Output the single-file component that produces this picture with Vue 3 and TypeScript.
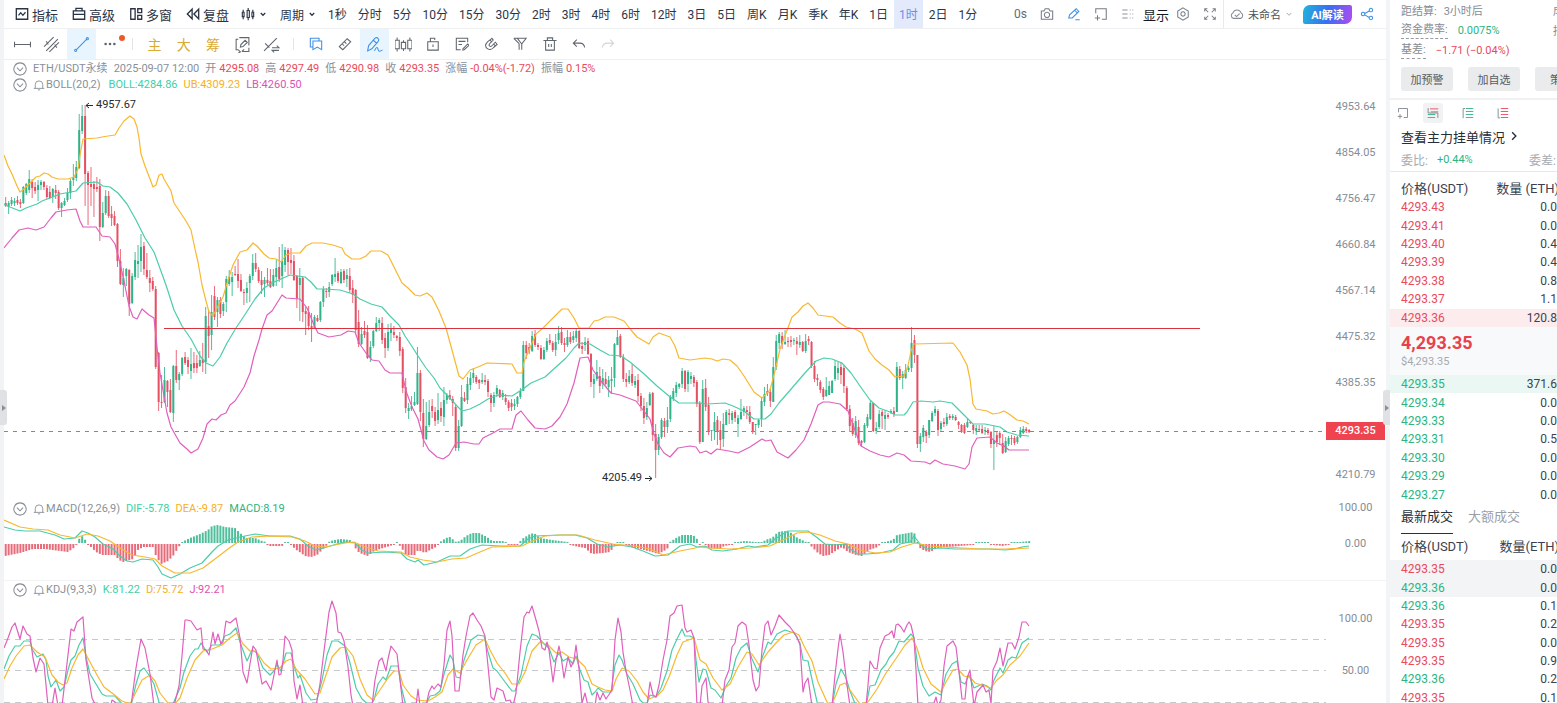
<script setup lang="ts">
type Point = [number, number]

const periods = ['1秒', '分时', '5分', '10分', '15分', '30分', '2时', '3时', '4时', '6时', '12时', '3日', '5日', '周K', '月K', '季K', '年K', '1日', '1时', '2日', '1分']
const activePeriod = '1时'

const icons: Record<string, string> = {
  indicator: 'M1.500 2h13v12h-13zM4 9.500l2.500-3 2.500 3 3-3.500',
  advanced: 'M1.500 4.500h13v9.500h-13zM4.500 4.500v-3h7v3M1.500 8.500h13',
  windows: 'M2 2h5v12h-5zM10 2h4.500v4.500h-4.500zM10 9.500h4.500v4.500h-4.500z',
  replay: 'M7 2.500v11L1.500 8zM14.500 2.500v11L9 8z',
  chevron: 'M3.500 6l4.500 4.500L12.500 6',
  next: 'M5.500 3l5 5-5 5',
  camera: 'M1.500 4.500h3l1.500-2.500h4l1.500 2.500h3v9.500h-13zM8 6a3 3 0 1 0 .01 0z',
  pencil: 'M2 12.500l1-3.500 7.500-7 3 3L6 12.500zM9 4l2.500 2.500M9.500 14.500h5',
  addbox: 'M2 7V2h12v12H9M1 12.500h6M4 9.500v6',
  list: 'M1.500 3.500h6M1.500 8h6M1.500 12.500h6M10 3.500h1M13 3.500h1M10 8h1M13 8h1M10 12.500h1M13 12.500h1',
  hexagon: 'M8 1l6 3.500v7L8 15l-6-3.500v-7zM8 5.500a2.500 2.500 0 1 0 .01 0z',
  expand: 'M2 5V2h3M2 2l4 4M11 2h3v3M14 2l-4 4M2 11v3h3M2 14l4-4M14 11v3h-3M14 14l-4-4',
  cloud: 'M4 13a3.500 3.500 0 0 1-.5-6.500 4.800 4.800 0 0 1 9 0A3.500 3.500 0 0 1 12 13zM5.500 9l2 2 3.500-3.500',
  share: 'M3.500 6a2 2 0 1 0 .01 0zM12.500 1.500a2 2 0 1 0 .01 0zM12.500 10.500a2 2 0 1 0 .01 0zM5.500 7.500l5-3M5.500 9l5 3',
  hline: 'M0 8h16M.5 5.500v5M15.500 5.500v5',
  parallel: 'M1 10L10 1M6 15l9-9M3 5l2 3M11 8l2 3M3 14L14 3',
  trend: 'M3.500 12.500l9-9M1.500 13.500a1 1 0 1 0 2 0 1 1 0 1 0-2 0M12.500 2.500a1 1 0 1 0 2 0 1 1 0 1 0-2 0',
  autodraw: 'M4 3H2v10h2M5 1.500h9V9M7.500 14.500h6.500V11M9.500 12.500l-2 2M6 10.500l.5-2.500 4-4 2 2-4 4zM4 13l2 2-2 1',
  measure: 'M1 14L13 2M2 7l4 4M8.500 11h6.500l-2-2M15 13.500H8.500l2 2',
  bookmark: 'M4.500 4.500h10v10l-5-3-5 3zM4 11.500H1.500v-10h10V4',
  ruler: 'M1.500 11L10.500 2l4 3.500-9 9zM5 8l2 2M7.500 5.500l2 2',
  draw: 'M1.500 14l1-5 6-7c2-1.500 4.500 1 3 3l-6 7zM7 4l3 3M8 14c2-5 3-3 3.500-1s2 1.500 4 0',
  candles: 'M0 4h4v8H0zM2 1.500V4M2 12v2.500M6 6h4v6H6zM8 4v2M8 12v2M12 4h4v8h-4zM14 1.500V4M14 12v2.500',
  lock: 'M2 5.500h12V15H2zM5 5.500V1.500h5v2M8 8.500v3',
  note: 'M14.500 6V1.500h-13v13h5M4 5h8M4 8.500h4M9 13.500l5.500-5.500 1.500 1.500-5.500 5-1.500.5z',
  magnet: 'M9 1.500L4 5.500c-6 6 2 12 7 6.500l4-3.500-2-2.500-4 4c-2 2-4.500-.5-2.500-2.500l4-4zM7 3.500L9 6M11 8l2 2.500',
  filter: 'M1 1.500h14L10 8v6.500M7 7.500v7M1 1.500l6 6M5 1.500L10 8',
  trash: 'M.5 4h15M3 4v11h10V4M5 4V1h6v3M6.500 8v3.500M9.500 8v3.500',
  undo: 'M5.500 3L1.500 7l4 4M2 7h7c3 0 5 2 5.500 5',
  redo: 'M10.500 3l4 4-4 4M14 7H7c-3 0-5 2-5.500 5',
  bell: 'M1 12.500h14M3 12.500V7.500a5 5 0 0 1 10 0v5M6.500 14.500h3',
  fold: 'M8 1a7 7 0 1 0 .01 0zM4.500 6.500L8 10l3.500-3.500'
}

const mainTools = [
  { icon: 'indicator', label: '指标' },
  { icon: 'advanced', label: '高级' },
  { icon: 'windows', label: '多窗' },
  { icon: 'replay', label: '复盘' }
]
const lineTools = ['hline', 'parallel', 'trend']
const textTools = ['主', '大', '筹']
const editTools = ['bookmark', 'ruler', 'draw', 'candles', 'lock', 'note', 'magnet', 'filter', 'trash', 'undo', 'redo']

/* Each candle: direction, high, body top, body bottom, low */
const candleData = `
r197,203,206,207 g201,203,207,214 g197,200,204,206 g198,201,203,206 r196,200,203,205 r199,202,204,208 g186,187,203,204 g183,184,193,195 g170,179,190,193 r179,182,188,198
r182,187,191,194 g180,185,190,201 g180,182,185,190 r181,182,187,190 r185,188,197,199 r186,192,198,199 g188,189,197,203 r185,190,193,199 r190,192,208,210 g202,203,208,217
g198,201,205,206 g188,193,200,202 g179,181,193,199 g164,177,180,186 g161,167,178,181 g114,130,168,169 g105,116,131,134 r105,116,174,206 r171,173,185,225 r167,184,187,206
r181,184,189,217 r177,187,189,192 r179,186,227,241 g202,213,227,228 g190,196,213,215 r191,196,216,218 r206,214,218,226 r211,216,225,226 r223,224,261,267 r249,261,284,285
g268,278,285,297 g268,269,276,286 r269,270,304,316 g273,276,303,304 g252,260,277,280 g245,261,264,278 g234,247,261,272 r242,246,269,275 r253,270,277,279 r270,278,283,292
r277,281,289,291 r286,289,367,369 r352,353,402,411 r375,402,403,408 g367,380,402,403 r380,381,392,407 r379,390,412,413 g365,366,413,422 r350,366,380,383 g372,374,380,390
g357,358,374,376 r352,357,363,365 r357,360,367,374 g348,364,371,379 r352,363,368,373 r355,363,368,373 g351,360,366,367 r343,359,363,372 g307,316,362,374 r310,326,336,358
g295,312,335,350 r286,296,317,320 g297,300,312,327 r297,300,314,318 g302,304,311,316 g276,279,302,312 g270,277,284,286 g272,277,282,296 r266,274,275,276 r259,274,281,288
r274,280,291,292 r289,292,293,305 g282,288,293,303 g274,276,283,302 g254,263,276,280 r253,263,269,272 r267,270,281,283 r271,280,285,294 g277,280,284,297 r268,280,283,285
r269,281,287,288 g269,275,286,287 g260,268,277,286 r247,267,279,282 g244,261,276,288 g247,250,265,272 r248,250,262,275 r248,260,263,274 r255,261,280,281 r275,276,298,308
g268,278,285,321 r276,278,312,322 r307,311,314,335 r306,312,326,330 r313,326,329,342 g315,317,328,328 r315,318,321,322 g301,302,320,322 g286,289,302,307 r288,291,292,298
g282,287,292,297 g274,275,284,286 g258,274,277,282 r271,273,281,283 g269,272,283,284 r269,271,280,283 g269,275,279,287 r268,276,290,293 r280,288,295,303 r289,290,330,333
r310,322,344,347 g327,334,344,345 r321,331,335,338 r325,332,358,359 g341,347,358,362 g330,331,346,348 g317,323,331,332 g318,320,323,331 r317,323,340,344 r333,338,348,358
g324,332,348,351 g323,328,333,341 r326,332,335,338 r335,336,338,341 r332,337,351,356 r347,349,388,393 r378,387,408,413 g403,408,411,419 g396,406,409,411 g392,402,405,406
g347,373,404,405 r370,373,412,421 r399,413,439,447 g402,426,439,440 g400,412,425,427 r399,406,411,418 r407,412,421,426 g393,410,420,424 r402,408,416,422 g387,400,417,426
g393,395,400,404 r390,395,399,400 r396,399,403,416 r405,407,448,451 g420,426,448,451 g385,397,426,427 r392,398,401,402 g377,384,400,404 g372,378,385,390 g368,373,378,383
r375,377,382,384 r379,380,383,389 g373,380,382,384 r375,380,382,385 r379,381,392,397 r393,395,403,412 g392,395,403,407 g385,388,394,397 r389,390,397,398 g390,393,397,400
r394,398,402,405 r400,402,408,411 r399,403,407,411 g399,404,406,410 g396,397,404,407 g388,391,397,399 g341,345,391,391 r341,345,353,359 r343,347,350,354 g331,336,351,352
r330,334,345,347 r343,345,347,350 r345,348,359,360 g347,350,359,360 g338,341,350,352 r334,340,343,345 r341,343,350,352 g334,342,350,356 g326,333,340,344 r327,332,343,345
r338,343,345,352 g330,337,345,347 r332,337,342,344 g331,336,340,343 g329,331,338,342 r330,331,348,349 r342,346,349,354 g337,342,345,351 r338,341,354,355 r353,354,382,387
g374,379,384,398 g360,372,379,381 r367,376,386,393 g369,378,384,389 r372,379,384,385 g376,380,387,397 g367,379,381,394 g343,344,378,387 g330,337,345,345 r334,336,357,358
r354,357,379,382 r373,379,382,387 g370,376,382,384 r364,374,383,386 g376,381,385,388 r374,380,396,402 r393,396,406,411 r398,406,418,424 g402,408,417,420 g392,394,405,406
r392,393,435,441 r424,434,450,478 g434,437,450,455 g418,420,437,439 r418,421,427,437 g407,420,427,433 g395,397,419,422 g388,391,399,401 g382,385,393,397 g383,384,387,389
g368,371,384,388 r370,371,389,392 g370,372,384,392 g372,376,379,384 r375,377,383,387 r380,382,404,407 r401,403,442,444 g380,389,442,442 r379,388,407,411 r397,405,431,435
g430,430,431,441 g412,422,431,440 r416,420,432,445 r421,430,440,450 g413,424,439,447 g410,412,425,425 r409,413,415,424 g411,413,420,424 r410,412,418,422 g415,418,424,437
g399,412,419,420 g406,408,412,416 r406,410,412,419 r406,412,422,424 r422,422,432,434 g424,424,425,435 g419,420,425,428 g397,401,419,427 g387,394,402,406 r384,391,393,396
r388,392,401,407 g357,367,402,402 g335,341,367,370 g332,334,343,349 r332,336,344,349 g330,342,344,345 r337,341,342,347 r336,340,342,347 g338,340,341,345 r337,341,344,355
g335,342,345,348 r341,342,351,352 g334,341,351,353 r336,339,341,345 r341,342,366,368 r361,366,379,382 r374,378,380,386 r380,382,390,393 r387,389,397,400 g377,390,396,397
g381,386,395,395 g380,381,393,393 g360,366,379,381 g362,368,373,380 r362,367,375,384 r366,368,386,393 r386,388,409,411 r405,409,426,432 r418,423,434,436 g416,421,435,438
r420,427,443,445 r440,441,443,447 g423,425,442,443 g414,417,426,428 g401,403,419,420 r403,403,431,432 g422,428,431,434 g410,414,427,429 r410,412,416,429 g410,415,419,430
r413,415,417,419 g409,411,413,414 r407,411,414,417 g362,367,412,412 r366,369,378,380 g371,374,378,389 g364,370,378,379 g366,368,370,372 g327,343,368,372 r335,340,355,363
r355,355,444,448 g433,436,444,452 g425,428,437,442 r430,432,436,443 g420,420,435,438 g411,413,421,422 g406,409,413,416 r409,411,430,436 g421,423,429,431 r418,422,424,427
g413,417,424,426 r414,416,418,420 g414,416,418,420 r415,417,420,421 r421,422,425,429 r424,425,432,433 r423,425,433,434 g419,422,427,428 r421,422,423,424 r424,425,430,434
g425,428,431,435 r425,429,430,432 r425,429,433,434 g427,430,431,435 r428,430,433,435 r431,432,444,448 g426,440,444,470 r432,435,442,447 r431,433,438,445 r434,443,453,454
g437,441,452,453 g436,438,444,446 r435,438,439,445 r436,438,443,445 g436,437,442,444 g427,430,437,438 g426,429,433,434 r427,429,431,433 r429,430,432,433`

const firstX = 5.7
const stepX = 2.941
const candles = candleData.trim().split(/\s+/).map((item, i) => {
  const [high, top, bottom, low] = item.slice(1).split(',').map(Number)
  return { up: item[0] === 'g', x: firstX + i * stepX, high, top, bottom, low }
})

const histogramKeys: Point[] = [[5, -12], [20, -9], [33, -5], [45, -5], [60, -7], [68, -8], [75, -3], [78, 3], [82, 7], [87, 1], [91, -3], [96, -8], [102, -11], [115, -11], [119, -16], [123, -18], [133, -15], [138, -6], [143, -3], [153, -3], [156, -12], [161, -20], [168, -17], [173, -12], [180, -1], [184, 2], [190, 5], [200, 9], [208, 13], [212, 17], [218, 18], [225, 16], [235, 15], [240, 10], [246, 5], [255, 5], [262, 2], [266, 1], [268, -2], [282, -2], [285, 1], [290, 1], [295, -5], [301, -9], [305, -12], [311, -13], [317, -11], [325, -3], [330, 2], [340, 4], [350, 3], [354, -1], [357, -7], [362, -10], [368, -12], [374, -7], [383, -4], [390, -2], [397, 1], [401, -3], [406, -11], [415, -11], [418, -6], [425, -9], [430, -6], [436, -3], [440, 1], [446, 5], [450, 6], [456, 1], [460, 2], [466, 7], [472, 10], [479, 10], [487, 6], [492, 2], [502, 2], [506, 1], [510, -1], [518, -1], [522, 4], [530, 9], [534, 10], [540, 5], [552, 3], [560, 2], [568, 1], [574, -2], [585, -4], [592, -10], [603, -9], [610, -8], [615, -1], [619, 1], [623, 1], [627, -2], [640, -5], [652, -8], [658, -10], [664, -7], [668, -4], [670, 1], [676, 5], [682, 8], [693, 8], [697, 4], [700, -1], [705, 1], [708, -4], [720, -5], [724, -2], [730, -1], [738, 1], [745, 2], [755, 1], [762, 1], [768, 4], [772, 5], [778, 11], [784, 12], [790, 11], [796, 6], [806, 1], [808, 1], [812, -3], [818, -9], [823, -12], [829, -11], [837, -6], [842, -3], [848, -8], [856, -11], [862, -12], [869, -6], [878, -3], [881, 1], [885, 1], [893, 3], [897, 8], [908, 10], [914, 11], [918, -1], [921, -5], [928, -8], [932, -7], [937, -4], [948, -3], [960, -2], [972, -1], [980, 1], [987, 1], [993, -1], [1004, -2], [1012, 1], [1020, 1], [1030, 2]]

function valueAt(x: number): number {
  const next = histogramKeys.findIndex((key) => key[0] > x)
  if (next < 1) return histogramKeys[next === 0 ? 0 : histogramKeys.length - 1][1]
  const [x0, y0] = histogramKeys[next - 1]
  const [x1, y1] = histogramKeys[next]
  return y0 + ((y1 - y0) * (x - x0)) / (x1 - x0)
}
const histogram = candles.map(({ x }) => {
  const value = valueAt(x)
  return { x, up: value >= 0, size: Math.max(1, Math.abs(value)) }
})

const lines = {
  upper: '4,155 8,166 12,174 17,186 20,192 24,189 29,184 36,177 40,176 44,173 48,174 52,177 58,179 68,179 74,177 78,169 80,155 83,139 97,138 102,137 108,136 115,135 119,128 124,121 130,116 134,119 137,127 139,138 141,154 145,166 150,179 153,187 156,185 159,175 162,174 164,179 171,191 174,203 180,212 186,221 191,230 195,249 198,262 202,285 206,301 209,312 213,316 218,306 223,297 228,280 233,265 240,252 247,250 253,243 257,246 264,254 269,258 276,259 281,262 286,255 291,253 300,253 306,246 312,243 323,243 333,245 342,248 345,254 352,259 360,259 366,256 371,251 381,251 388,255 395,269 402,283 408,288 415,295 420,296 427,293 432,297 439,311 446,328 452,350 459,376 463,379 470,370 478,367 487,363 512,364 517,373 522,373 524,362 529,350 536,334 543,328 550,321 556,315 562,309 568,309 574,318 579,328 589,328 594,321 599,320 605,317 614,317 624,321 631,330 637,337 649,344 653,337 659,333 670,337 675,346 679,358 690,360 705,358 712,359 717,361 723,359 730,360 737,366 744,376 754,392 762,398 770,390 775,371 780,349 786,333 792,317 798,312 803,306 808,303 813,308 818,315 833,317 840,323 846,327 855,329 862,333 869,351 875,359 882,365 889,370 895,377 904,376 908,366 911,351 914,344 953,343 960,352 967,365 970,379 973,404 976,409 987,411 993,414 999,413 1004,411 1009,414 1017,420 1023,421 1029,424',
  middle: '4,204 10,207 20,211 26,208 37,204 42,201 50,198 60,194 76,191 83,183 97,182 103,186 110,187 118,193 127,204 136,220 145,238 154,252 162,274 167,288 174,310 182,326 191,339 200,356 206,363 213,366 220,357 227,343 236,328 246,313 255,299 264,288 272,283 281,279 290,275 305,277 311,282 317,289 324,289 340,290 353,294 360,299 371,304 382,307 390,316 399,325 405,336 411,345 418,356 426,368 434,378 440,388 448,396 457,406 462,411 470,409 480,404 488,399 498,395 512,396 523,389 531,383 545,377 556,367 566,358 574,348 579,343 590,344 600,350 609,355 621,356 630,362 643,373 657,386 669,396 679,403 700,403 707,404 725,403 733,406 744,411 750,416 754,419 765,419 771,414 779,403 792,388 804,374 816,361 824,358 832,359 842,363 851,373 860,386 870,400 879,408 890,412 895,415 904,415 907,412 913,402 921,401 933,402 940,401 952,403 960,411 970,421 973,424 985,424 1000,427 1007,432 1017,435 1029,436',
  lower: '4,248 12,238 19,230 28,228 36,230 44,227 51,218 56,212 67,210 76,209 80,221 83,227 96,227 102,236 110,237 115,244 119,259 124,281 129,306 133,317 137,319 142,309 149,315 154,318 157,347 160,373 164,396 167,413 171,427 176,436 180,443 187,449 191,453 198,449 203,438 207,424 212,419 216,420 221,415 226,413 230,405 235,401 244,387 250,373 254,356 259,340 262,329 267,315 272,311 282,295 286,298 300,299 307,308 314,325 318,333 329,337 341,335 348,331 355,332 359,343 366,353 372,360 379,361 385,370 390,373 402,373 406,391 412,407 418,419 424,441 429,450 437,457 443,459 449,455 456,443 464,442 474,444 479,444 483,438 493,433 500,429 512,429 516,415 521,411 528,420 535,428 545,429 552,426 560,417 567,404 574,383 580,358 588,357 593,370 601,381 611,393 620,395 636,401 643,410 650,419 654,434 658,444 664,453 670,457 678,448 690,446 696,447 700,453 706,451 711,454 717,449 729,451 738,453 750,447 762,439 766,441 771,440 777,452 788,458 796,450 804,440 811,424 818,405 823,402 829,402 840,404 848,411 853,425 861,446 870,451 880,455 889,457 897,453 904,455 911,461 925,462 930,464 935,460 943,464 955,466 965,469 969,464 972,447 977,438 990,437 997,443 1004,446 1009,450 1029,450',
  dif: '4,527 15,530 25,531 40,531 55,535 64,539 75,538 82,531 88,533 95,537 103,544 113,549 120,556 127,561 133,562 142,559 153,560 158,567 162,574 171,578 180,574 190,568 202,563 212,552 218,546 228,540 240,537 255,534 270,536 290,536 300,539 308,546 316,550 327,547 337,544 345,542 355,543 362,550 368,553 385,552 401,553 407,559 415,562 418,560 424,565 437,562 450,556 460,556 470,549 482,545 500,546 520,546 528,539 535,536 560,535 575,535 587,538 597,544 608,547 620,545 632,547 643,551 655,556 668,555 680,546 690,544 697,547 705,546 712,550 723,551 737,549 748,546 755,547 768,545 775,539 788,531 808,531 815,536 825,544 835,545 845,544 850,549 858,554 867,554 880,553 893,550 900,544 910,542 914,536 920,544 927,549 940,548 955,549 990,549 1005,550 1015,549 1022,547 1029,546',
  dea: '4,520 20,527 33,529 48,530 60,535 75,538 87,534 98,536 110,541 120,548 132,555 145,557 155,559 162,566 175,573 190,573 203,568 215,559 228,549 238,542 252,537 270,536 292,537 305,541 315,546 325,547 345,543 354,542 365,547 378,551 401,552 410,557 423,560 437,562 452,559 466,558 480,552 492,547 522,546 530,542 545,536 560,535 578,535 595,540 613,544 635,546 650,549 663,555 680,551 690,549 700,547 710,548 730,549 750,548 770,546 785,539 797,533 808,532 820,535 835,541 848,544 860,550 875,553 890,552 902,547 915,543 930,546 945,547 980,549 1005,549 1029,548',
  j: '4,648 8,638 12,627 15,623 20,639 23,626 27,634 30,636 33,658 36,672 40,658 44,664 48,706 52,706 55,688 58,706 62,706 66,672 71,629 74,631 77,622 83,617 86,660 92,698 96,706 110,710 112,700 115,702 117,710 131,706 136,668 141,639 145,648 150,674 154,706 174,706 179,686 182,656 185,620 187,620 191,621 197,630 201,628 203,649 206,650 209,655 213,632 215,644 218,634 221,644 223,642 226,621 230,623 236,618 240,638 243,672 247,683 250,664 253,646 256,650 262,684 266,681 271,690 277,660 279,675 281,674 283,660 285,636 289,641 292,650 294,681 297,699 300,685 303,706 316,706 320,684 324,651 329,612 332,601 336,613 338,632 341,633 344,641 348,667 351,695 353,706 372,706 375,680 379,661 382,658 386,671 388,659 391,646 397,654 400,680 403,706 416,706 418,689 420,706 426,706 429,692 432,686 434,689 438,684 441,687 444,665 447,630 450,621 452,636 455,691 459,691 463,655 466,636 470,616 473,613 477,620 481,626 485,636 488,666 491,697 494,700 497,688 503,691 506,701 510,700 513,706 516,693 520,652 524,617 527,612 529,613 532,606 536,620 539,631 542,648 545,650 547,642 549,650 551,666 553,682 556,660 559,646 561,656 564,678 568,657 571,667 574,660 576,645 579,669 582,703 585,693 588,706 595,706 597,692 600,700 603,693 606,699 612,690 615,640 618,618 621,632 623,652 626,671 630,690 633,706 647,706 650,682 653,695 656,697 659,685 663,660 667,640 670,616 674,613 677,606 682,605 685,628 687,632 691,630 694,638 697,706 700,706 702,686 706,678 708,702 710,706 722,706 725,680 729,670 732,647 735,643 738,626 742,622 746,625 749,645 753,680 756,691 759,686 762,650 765,625 768,621 771,635 775,626 779,615 785,622 790,627 797,637 800,645 803,692 805,683 808,678 812,706 832,706 835,675 838,649 840,634 843,652 847,685 850,706 866,706 868,685 870,661 874,668 877,669 880,648 885,636 889,634 892,631 894,638 896,625 898,624 901,627 904,632 907,625 909,622 911,625 914,638 916,670 918,706 933,706 936,697 938,706 941,700 944,666 947,646 953,641 956,647 959,672 962,699 965,699 967,678 970,670 974,706 977,692 983,685 986,692 989,690 991,704 993,670 997,661 1000,648 1003,666 1008,643 1012,643 1015,649 1019,637 1022,622 1026,622 1029,626',
  k: '4,669 9,656 15,646 20,646 24,641 30,641 32,649 37,657 43,654 46,660 48,676 51,687 56,680 60,691 64,687 68,670 71,660 75,656 79,645 83,638 86,657 90,674 96,684 102,694 106,696 115,696 124,706 131,706 136,684 140,671 144,668 149,675 154,684 160,706 172,706 180,688 184,672 190,656 195,649 198,649 201,643 207,652 212,645 220,645 225,636 230,634 236,628 240,642 247,661 252,650 257,653 263,668 270,675 274,671 277,664 281,671 286,653 291,653 295,669 298,678 300,675 306,693 311,700 317,699 322,680 327,655 332,641 338,641 345,646 350,663 356,688 362,699 370,706 374,700 378,684 383,677 386,680 391,666 398,666 401,686 406,706 425,706 430,696 435,695 440,691 444,674 450,655 453,660 456,677 460,678 464,660 471,640 478,635 484,636 488,652 493,668 497,671 505,682 512,691 515,691 521,675 527,646 532,634 537,636 544,644 549,648 554,662 559,653 563,661 568,658 573,664 576,656 580,670 584,680 588,682 592,695 595,692 598,688 603,692 611,692 615,665 619,655 622,660 627,674 633,684 640,700 646,706 650,695 656,697 661,688 667,671 672,650 677,639 682,629 685,636 690,636 694,638 696,660 699,682 703,669 706,670 711,688 715,690 721,698 726,686 731,678 736,658 741,648 747,643 752,659 758,672 762,658 768,642 771,644 777,634 785,630 794,633 800,643 803,660 808,661 813,684 818,706 832,706 836,684 841,669 846,678 850,691 856,706 866,706 870,686 875,685 881,670 886,664 889,658 894,652 899,641 904,642 911,634 914,638 918,668 923,686 929,696 935,692 941,695 946,674 952,664 957,661 961,682 965,684 969,675 974,688 982,684 987,686 991,690 994,680 1000,668 1003,673 1008,660 1012,657 1016,658 1022,643 1029,638',
  d: '4,679 10,666 16,656 24,646 30,645 37,652 45,657 52,675 58,682 63,685 67,683 72,668 78,655 83,649 90,662 97,675 104,687 112,693 122,701 130,704 136,692 142,680 150,675 155,681 160,693 167,702 173,706 180,698 187,678 195,660 203,651 212,649 222,645 230,638 237,633 243,644 250,651 256,651 264,663 271,669 280,668 286,661 291,659 296,669 305,679 315,694 320,693 325,678 332,657 340,648 346,647 353,656 360,679 367,695 373,700 380,690 388,678 394,671 399,671 403,685 411,696 417,700 428,701 435,697 442,692 448,675 453,669 460,673 467,660 476,645 485,639 490,650 497,663 505,673 512,684 519,684 525,672 532,651 540,642 548,645 556,653 562,652 569,657 577,659 585,667 592,684 598,687 605,690 612,691 616,679 622,668 629,671 637,681 643,692 649,699 657,696 663,690 669,677 677,655 683,642 694,638 700,660 706,664 713,678 722,690 730,684 738,667 747,652 752,654 759,665 768,652 776,643 784,635 793,632 799,635 804,646 812,661 818,682 827,702 831,706 836,695 840,685 845,683 850,690 860,704 868,702 877,689 886,673 895,660 905,645 912,638 917,648 923,668 931,684 941,692 946,682 953,670 958,669 964,676 970,677 975,683 985,686 991,688 997,680 1003,675 1010,665 1020,656 1029,643'
}

const quote = [
  ['开', '4295.08'], ['高', '4297.49'], ['低', '4290.98'], ['收', '4293.35'],
  ['涨幅', '-0.04%(-1.72)'], ['振幅', '0.15%']
]
const priceTicks = ['4953.64', '4854.05', '4756.47', '4660.84', '4567.14', '4475.32', '4385.35', '', '4210.79']

const asks = [['4293.43', '0.0'], ['4293.41', '0.0'], ['4293.40', '0.4'], ['4293.39', '0.4'], ['4293.38', '0.8'], ['4293.37', '1.1'], ['4293.36', '120.8']]
const bids = [['4293.35', '371.6'], ['4293.34', '0.0'], ['4293.33', '0.0'], ['4293.31', '0.5'], ['4293.30', '0.0'], ['4293.29', '0.0'], ['4293.27', '0.0']]
const trades = [
  { price: '4293.35', size: '0.0', up: false }, { price: '4293.36', size: '0.0', up: true },
  { price: '4293.36', size: '0.1', up: true }, { price: '4293.35', size: '0.2', up: false },
  { price: '4293.35', size: '0.0', up: false }, { price: '4293.35', size: '0.9', up: false },
  { price: '4293.36', size: '0.2', up: true }, { price: '4293.35', size: '0.1', up: false }
]
</script>

<template>
  <div class="app">
    <main class="workspace">
      <header class="bar topbar">
        <div class="main-tools">
          <button v-for="tool in mainTools" :key="tool.label" class="tool">
            <svg class="icon dark" viewBox="0 0 16 16"><path :d="icons[tool.icon]" /></svg>{{ tool.label }}
          </button>
          <button class="tool style-tool" aria-label="K线样式">
            <svg class="icon candle-icon" viewBox="0 0 16 16"><path d="M1.500 6h2v5h-2zM2.500 3v3M2.500 11v3M7 4h2.500v8H7zM8.200 1v3M8.200 12v3M12.500 6h2v5h-2zM13.500 3v3M13.500 11v3" /></svg>
            <svg class="caret" viewBox="0 0 16 16"><path :d="icons.chevron" /></svg>
          </button>
          <button class="tool small">周期<svg class="caret" viewBox="0 0 16 16"><path :d="icons.chevron" /></svg></button>
        </div>
        <nav class="periods">
          <button v-for="period in periods" :key="period" :class="{ active: period === activePeriod }">{{ period }}</button>
        </nav>
        <div class="right-tools">
          <span class="seconds">0s</span>
          <button aria-label="截图"><svg class="icon" viewBox="0 0 16 16"><path :d="icons.camera" /></svg></button>
          <button class="blue" aria-label="画线"><svg class="icon" viewBox="0 0 16 16"><path :d="icons.pencil" /></svg></button>
          <button aria-label="新增窗口"><svg class="icon" viewBox="0 0 16 16"><path :d="icons.addbox" /></svg></button>
          <button class="display"><svg class="icon faint" viewBox="0 0 16 16"><path :d="icons.list" /></svg>显示</button>
          <button aria-label="设置"><svg class="icon" viewBox="0 0 16 16"><path :d="icons.hexagon" /></svg></button>
          <button aria-label="全屏"><svg class="icon" viewBox="0 0 16 16"><path :d="icons.expand" /></svg></button>
        </div>
        <div class="account">
          <button class="layout-name">
            <svg class="icon" viewBox="0 0 16 16"><path :d="icons.cloud" /></svg>未命名
            <svg class="caret" viewBox="0 0 16 16"><path :d="icons.chevron" /></svg>
          </button>
          <button class="ai">AI解读</button>
          <button class="blue" aria-label="分享"><svg class="icon" viewBox="0 0 16 16"><path :d="icons.share" /></svg></button>
        </div>
      </header>

      <div class="bar drawbar">
        <div class="group lines">
          <button v-for="name in lineTools" :key="name" :class="{ on: name === 'trend' }" :aria-label="name">
            <svg class="icon big" viewBox="0 0 16 16"><path :d="icons[name]" /></svg>
          </button>
          <button class="more" aria-label="更多">
            <svg class="icon" viewBox="0 0 16 16"><g class="dots"><circle cx="3" cy="8" r="1.500" /><circle cx="8" cy="8" r="1.500" /><circle cx="13" cy="8" r="1.500" /></g></svg>
            <i class="badge"></i>
          </button>
        </div>
        <i class="sep"></i>
        <div class="group marks">
          <button v-for="word in textTools" :key="word" class="gold">{{ word }}</button>
          <button aria-label="自动画线"><svg class="icon big" viewBox="0 0 16 16"><path :d="icons.autodraw" /></svg></button>
          <button aria-label="测量"><svg class="icon big" viewBox="0 0 16 16"><path :d="icons.measure" /></svg></button>
        </div>
        <i class="sep"></i>
        <div class="group edits">
          <button v-for="name in editTools" :key="name" :aria-label="name" :class="{ on: name === 'draw', blue: name === 'bookmark', off: name === 'redo' }">
            <svg class="icon" :class="{ big: name === 'draw' || name === 'candles' }" viewBox="0 0 16 16"><path :d="icons[name]" /></svg>
          </button>
        </div>
      </div>

      <section class="charts">
        <div class="pane price-pane">
          <svg class="plot">
            <g transform="translate(-4,-60)">
              <g v-for="(c, i) in candles" :key="i" :class="c.up ? 'up' : 'down'">
                <rect class="wick" :x="c.x - 0.5" :y="c.high" width="1" :height="c.low - c.high" />
                <rect :x="c.x - 1" :y="c.top" width="2" :height="Math.max(1, c.bottom - c.top)" />
              </g>
              <polyline class="yellow-line" :points="lines.upper" />
              <polyline class="teal-line" :points="lines.middle" />
              <polyline class="pink-line" :points="lines.lower" />
              <path class="resistance" d="M164 328.500H1200" />
              <path class="arrow" d="M93 105.500H86M89 103l-3 2.500 3 2.500M645 478.500h7M649 476l3 2.500-3 2.500" />
              <text class="mark" x="96" y="108">4957.67</text>
              <text class="mark" x="602" y="481">4205.49</text>
            </g>
            <line class="last-price" x1="0" x2="100%" y1="371.500" y2="371.500" />
          </svg>
          <div class="legend">
            <div class="legend-row">
              <svg class="icon" viewBox="0 0 16 16"><path :d="icons.fold" /></svg>
              <span class="title">ETH/USDT永续</span><span>2025-09-07 12:00</span>
              <span v-for="[name, value] in quote" :key="name" class="quote">{{ name }}<b class="red">{{ value }}</b></span>
            </div>
            <div class="legend-row">
              <svg class="icon" viewBox="0 0 16 16"><path :d="icons.fold" /></svg>
              <span class="title wide"><svg class="bell" viewBox="0 0 16 16"><path :d="icons.bell" /></svg>BOLL(20,2)</span>
              <b class="teal">BOLL:4284.86</b><b class="yellow">UB:4309.23</b><b class="pink">LB:4260.50</b>
            </div>
          </div>
          <div class="axis price-axis">
            <span v-for="(tick, i) in priceTicks" :key="i">{{ tick }}</span>
            <strong class="tag">4293.35</strong>
          </div>
        </div>

        <div class="pane macd-pane">
          <svg class="plot">
            <g transform="translate(-4,-500)">
              <rect v-for="(bar, i) in histogram" :key="i" :class="bar.up ? 'up' : 'down'" class="bar-mark" :x="bar.x - 1" :y="bar.up ? 543 - bar.size : 544" width="2" :height="bar.size" />
              <polyline class="teal-line" :points="lines.dif" />
              <polyline class="yellow-line" :points="lines.dea" />
            </g>
          </svg>
          <div class="legend">
            <div class="legend-row">
              <svg class="icon" viewBox="0 0 16 16"><path :d="icons.fold" /></svg>
              <span class="title"><svg class="bell" viewBox="0 0 16 16"><path :d="icons.bell" /></svg>MACD(12,26,9)</span>
              <b class="teal">DIF:-5.78</b><b class="yellow">DEA:-9.87</b><b class="green">MACD:8.19</b>
            </div>
          </div>
          <div class="axis macd-axis"><span>100.00</span><span>0.00</span></div>
        </div>

        <div class="pane kdj-pane">
          <svg class="plot">
            <line class="guide" x1="0" x2="100%" y1="58.500" y2="58.500" />
            <line class="guide" x1="0" x2="100%" y1="89.500" y2="89.500" />
            <line class="guide" x1="0" x2="100%" y1="121.500" y2="121.500" />
            <g transform="translate(-4,-581)">
              <polyline class="teal-line" :points="lines.k" />
              <polyline class="yellow-line" :points="lines.d" />
              <polyline class="pink-line" :points="lines.j" />
            </g>
          </svg>
          <div class="legend">
            <div class="legend-row">
              <svg class="icon" viewBox="0 0 16 16"><path :d="icons.fold" /></svg>
              <span class="title"><svg class="bell" viewBox="0 0 16 16"><path :d="icons.bell" /></svg>KDJ(9,3,3)</span>
              <b class="teal">K:81.22</b><b class="yellow">D:75.72</b><b class="pink">J:92.21</b>
            </div>
          </div>
          <div class="axis kdj-axis"><span>100.00</span><span>50.00</span></div>
        </div>
      </section>
      <button class="handle left" aria-label="展开左栏"></button>
      <button class="handle right" aria-label="收起右栏"></button>
    </main>

    <aside class="panel">
      <div class="facts">
        <div class="fact"><span>距结算:</span><span>3小时后</span><span class="cut">成交</span></div>
        <div class="fact"><span class="hint">资金费率:</span><span class="green">0.0075%</span><span class="cut">持仓</span></div>
        <div class="fact"><span class="hint">基差:</span><span class="red">−1.71 (−0.04%)</span></div>
      </div>
      <div class="actions"><button>加预警</button><button>加自选</button><button>策略</button></div>
      <div class="book-tabs">
        <button aria-label="新增窗口"><svg class="icon" viewBox="0 0 16 16"><path :d="icons.addbox" /></svg></button>
        <button class="picked" aria-label="买卖盘"><svg class="icon" viewBox="0 0 16 16"><path class="r" d="M4 2.500h11M5 6.500h10" /><path d="M1.500 1.500v6.500h13v6.500" /><path class="g" d="M1 10h10M1 14h10" /></svg></button>
        <button aria-label="买盘"><svg class="icon" viewBox="0 0 16 16"><path d="M4 2H1.500v13" /><path class="g" d="M5 2h10M5 6h10M5 10h10M5 14h10" /></svg></button>
        <button aria-label="卖盘"><svg class="icon" viewBox="0 0 16 16"><path d="M4 14.500H1.500V2" /><path class="r" d="M5 2h10M5 6h10M5 10h10M5 14h10" /></svg></button>
      </div>
      <a class="whales" href="#">查看主力挂单情况<svg class="icon" viewBox="0 0 16 16"><path :d="icons.next" /></svg></a>
      <div class="ratio"><span>委比:</span><b class="green">+0.44%</b><span class="diff">委差:</span></div>

      <div class="columns book-head"><span>价格(USDT)</span><span>数量 (ETH)</span></div>
      <div class="rows">
        <div v-for="[price, size] in asks" :key="price" class="row red" :class="{ askbg: size === '120.8' }"><span>{{ price }}</span><em>{{ size }}</em></div>
      </div>
      <div class="last"><strong>4,293.35</strong><span>$4,293.35</span></div>
      <div class="rows">
        <div v-for="[price, size] in bids" :key="price" class="row green" :class="{ bidbg: size === '371.6' }"><span>{{ price }}</span><em>{{ size }}</em></div>
      </div>
      <div class="tabs"><button class="current">最新成交</button><button>大额成交</button></div>
      <div class="columns trade-head"><span>价格(USDT)</span><span>数量(ETH)</span></div>
      <div class="rows trades">
        <div v-for="(trade, i) in trades" :key="i" class="row" :class="[trade.up ? 'green' : 'red', { fresh: i < 2 }]"><span>{{ trade.price }}</span><em>{{ trade.size }}</em></div>
      </div>
    </aside>
  </div>
</template>

<style>
body { margin: 0; overflow: hidden; }
</style>

<style scoped>
.app { display: flex; height: 100vh; overflow: hidden; background: #fff; color: #2b3445; font-family: Roboto, "Noto Sans CJK SC", sans-serif; font-size: 12px; }
* { box-sizing: border-box; }
button { margin: 0; padding: 0; border: 0; background: none; color: inherit; font: inherit; white-space: nowrap; display: flex; align-items: center; justify-content: center; }
svg { display: block; flex: none; }
.icon { width: 14px; height: 14px; fill: none; stroke: currentColor; stroke-width: 1.2; }
.icon.big { width: 17px; height: 17px; stroke-width: 1; }
.icon.dark { stroke-width: 1.5; }
.caret { width: 8px; height: 8px; fill: none; stroke: currentColor; stroke-width: 2.5; }
.red { color: #ea4a5c; }
.green { color: #2cb582; }
.teal { color: #3fcfa5; }
.yellow { color: #f7b01e; }
.pink { color: #dd52b5; }
b { font-weight: 400; }

.workspace { position: relative; flex: 1; min-width: 0; display: flex; flex-direction: column; border-left: 4px solid #f2f3f5; border-right: 4px solid #f2f4f5; }
.bar { display: flex; align-items: center; flex: none; border-bottom: 1px solid #edeff1; }
.topbar { height: 29px; padding-left: 11px; }
.main-tools { display: flex; gap: 14px; font-size: 13px; }
.tool { gap: 3px; }
.tool.small { font-size: 12px; gap: 4px; }
.style-tool { margin: 0 -1px 0 -2px; gap: 4px; }
.candle-icon { stroke-width: 1.3; }
.periods { display: flex; gap: 1px; height: 100%; margin-left: 7px; }
.periods button { padding: 0 5px 1px; }
.periods .active { background: #e2eafc; color: #6a8fe8; }
.right-tools { display: flex; gap: 13px; align-items: center; margin-left: auto; margin-right: 6px; color: #767c85; }
.seconds { color: #646b75; }
.blue { color: #3f90e3; }
.display { gap: 8px; margin-right: -6px; font-size: 13px; color: #15191f; }
.faint { color: #8c929a; }
.account { display: flex; align-items: center; gap: 8px; height: 100%; padding: 0 12px 0 6px; border-left: 1px solid #e8eaed; }
.layout-name { gap: 4px; font-size: 11px; color: #4c535d; margin-right: 2px; }
.layout-name .icon, .layout-name .caret { color: #858b93; }
.layout-name .caret { stroke-width: 1.5; }
.ai { width: 49px; height: 19px; border-radius: 7px 2px 7px 2px; background: linear-gradient(100deg, #23b4d8, #366ff3 50%, #b24af0); color: #fff; font-size: 11px; font-weight: 700; }

.drawbar { height: 31px; padding-left: 4px; color: #60666e; }
.group { display: flex; height: 100%; }
.group button { flex: 1; position: relative; }
.lines { width: 117px; }
.marks { width: 146px; }
.edits { width: 322px; }
.sep { width: 1px; height: 12px; margin: 0 7px; background: #e2e4e7; }
.group .on { background: #e8f5fe; color: #3f90e3; }
.group .off { color: #d3d5d8; }
.group .gold { color: #d8aa33; font-size: 14px; }
.dots { fill: currentColor; stroke: none; }
.badge { position: absolute; right: 0; top: 6px; width: 6px; height: 6px; border-radius: 50%; background: #eb5a2b; }

.charts { flex: 1; min-height: 0; display: flex; flex-direction: column; }
.pane { position: relative; display: flex; overflow: hidden; }
.price-pane { flex: none; height: 440px; }
.macd-pane { flex: none; height: 81px; border-bottom: 1px solid #f2f3f4; }
.kdj-pane { flex: 1; min-height: 0; }
.plot { flex: 1; min-width: 0; height: 100%; }
.up { fill: #30b389; }
.down { fill: #e45163; }
.wick, .bar-mark { opacity: 0.85; }
polyline { fill: none; stroke-width: 1.2; stroke-linejoin: round; }
.yellow-line { stroke: #f8b830; }
.teal-line { stroke: #4ccdaa; }
.pink-line { stroke: #e060bd; }
.resistance { stroke: #d8323f; stroke-width: 1; }
.arrow { fill: none; stroke: #252a31; }
.mark { fill: #252a31; font-size: 11px; }
.last-price { stroke: #d9607f; stroke-dasharray: 4 5; }
.guide { stroke: #c6c8cb; stroke-dasharray: 6 5; }

.legend { position: absolute; left: 9px; top: 1px; color: #8a9098; font-size: 11px; }
.legend-row { display: flex; align-items: center; gap: 6px; height: 16px; line-height: 16px; white-space: nowrap; }
.title, .quote { display: flex; align-items: center; gap: 1px; }
.quote { gap: 3px; }
.title.wide { margin-right: 2px; }
.bell { width: 12px; height: 12px; fill: none; stroke: currentColor; stroke-width: 1.2; }

.axis { position: relative; flex: none; display: flex; flex-direction: column; width: 60px; padding-right: 1px; color: #868c93; font-size: 11px; text-align: center; }
.price-axis { padding-top: 24px; }
.price-axis span { flex: none; height: 46px; line-height: 46px; }
.tag { position: absolute; left: 0; right: 1px; top: 362px; height: 18px; line-height: 18px; background: #ef4450; color: #fff; font-weight: 500; }
.macd-axis { padding-top: 1px; }
.macd-axis span { height: 36px; line-height: 14px; }
.kdj-axis { padding-top: 31px; }
.kdj-axis span { flex: none; height: 52px; line-height: 14px; }

.handle { position: absolute; top: 390px; width: 7px; height: 35px; background: #dfe1e4; }
.handle::after { content: ""; border: 3px solid transparent; border-left: 4px solid #8b9097; border-right: 0; }
.handle.left { left: -4px; border-radius: 0 3px 3px 0; }
.handle.right { right: -4px; border-radius: 3px 0 0 3px; }

.panel { flex: 0 0 167px; overflow: hidden; display: flex; flex-direction: column; white-space: nowrap; }
.facts { flex: none; font-size: 11px; color: #868c93; }
.fact { position: relative; display: flex; align-items: center; gap: 7px; height: 20px; padding-left: 11px; }
.hint { line-height: 17px; border-bottom: 1px dashed #979ca2; margin-right: 3px; }
.cut { position: absolute; left: 163px; }
.actions { flex: none; display: flex; gap: 15px; padding: 7px 0 0 11px; }
.actions button { flex: 0 0 52px; height: 24px; border-radius: 3px; background: #e9ebed; color: #565c64; font-size: 11px; }
.book-tabs { flex: none; display: flex; gap: 15px; height: 28px; align-items: center; margin-top: 7px; padding-left: 3px; border-top: 2px solid #f0f1f3; color: #7f8790; }
.book-tabs button { width: 20px; height: 20px; border-radius: 3px; }
.book-tabs button:first-child { margin-right: -5px; }
.book-tabs .icon { width: 12px; height: 12px; }
.book-tabs .picked { background: #f1f2f4; }
.r { stroke: #ea4a5c; }
.g { stroke: #2cb582; }
.whales { flex: none; display: flex; align-items: center; gap: 3px; height: 20px; padding-left: 11px; color: #262d38; font-size: 13px; text-decoration: none; }
.whales .icon { width: 12px; height: 12px; stroke-width: 1.8; }
.ratio { flex: none; position: relative; display: flex; align-items: center; height: 26px; padding: 1px 0 0 11px; gap: 9px; border-bottom: 1px solid #e6e8ea; color: #a5aaaf; }
.ratio b { font-size: 11px; }
.diff { position: absolute; left: 139px; }
.columns { flex: none; display: flex; justify-content: space-between; align-items: center; height: 26px; margin-right: -2px; padding-left: 11px; font-size: 13px; color: #394150; }
.book-head { padding-top: 4px; }
.trade-head { padding-bottom: 4px; }
.rows { flex: none; display: grid; grid-template-rows: repeat(7, 1fr); height: 129px; }
.row { display: flex; align-items: center; justify-content: space-between; padding-left: 11px; }
.row em { color: #3c434d; font-style: normal; }
.askbg { background: #fdeced; }
.bidbg { background: #eaf7f2; }
.last { flex: none; display: flex; flex-direction: column; justify-content: center; height: 48px; padding-left: 11px; background: #f8f9fb; }
.last strong { color: #e8414d; font-size: 18px; font-weight: 700; line-height: 20px; }
.last span { color: #a5aaaf; font-size: 11px; line-height: 17px; }
.tabs { flex: none; display: flex; gap: 15px; height: 30px; padding-left: 11px; font-size: 13px; color: #9ba0a7; }
.tabs button { border-bottom: 1px solid transparent; padding-bottom: 6px; }
.tabs .current { color: #2a313c; border-color: #2a313c; }
.trades { grid-template-rows: repeat(8, 1fr); height: 147px; }
.fresh { background: #f3f4f6; }
</style>
